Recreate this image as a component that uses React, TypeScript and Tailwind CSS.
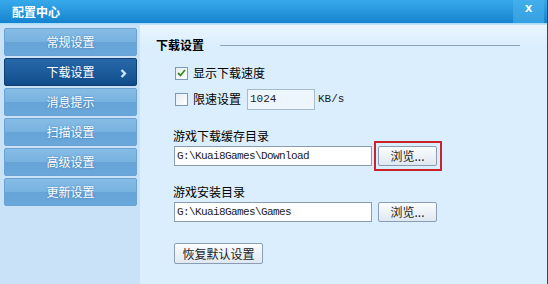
import { useState } from "react";

const cjk = "font-['Noto_Sans_CJK_SC','Noto_Sans',sans-serif]";
const mono = "font-['Liberation_Mono','Noto_Sans_CJK_SC',monospace]";

const navItems = ["常规设置", "下载设置", "消息提示", "扫描设置", "高级设置", "更新设置"];

function Checkbox({ checked }: { checked: boolean }) {
	return (
		<span className="w-[13px] h-[13px] border border-[#7b9ab8] bg-gradient-to-br from-[#e6edf3] to-white flex items-center justify-center">
			{checked && (
				<svg width="9" height="8" viewBox="0 0 9 8">
					<path d="M1 4 L3.5 6.5 L8 1" fill="none" stroke="#3c8a26" strokeWidth="1.8" />
				</svg>
			)}
		</span>
	);
}

function BrowseButton() {
	return (
		<button className="w-[59px] h-[20px] rounded-[2px] border border-[#8a9db3] bg-gradient-to-b from-[#fbfdff] to-[#dfe8f1] text-[12px] leading-none text-[#222] flex items-center justify-center pb-[1px]">
			浏览...
		</button>
	);
}

function PathInput({ value }: { value: string }) {
	return (
		<div
			className={`w-[198px] h-[20px] border border-[#8a9cb0] bg-white flex items-center px-[2px] text-[11px] tracking-[-0.6px] text-[#222] ${mono}`}
		>
			{value}
		</div>
	);
}

export default function App() {
	const [active] = useState(1);

	return (
		<div className={`w-[548px] h-[284px] flex flex-col overflow-hidden bg-[#dbeefd] border-r border-[#33475c] ${cjk}`}>
			{/* title bar */}
			<div className="h-[23px] flex items-center bg-gradient-to-b from-[#37a9ea] to-[#1583cf]">
				<span className="pl-[12px] text-[12px] font-bold text-white leading-none">配置中心</span>
				<div className="ml-auto mr-[3px] w-[31px] h-full bg-[#4bb2ec]/60 flex items-start justify-center pt-[1px]">
					<span className="text-white font-bold text-[13px] leading-none font-['Liberation_Sans',sans-serif]">x</span>
				</div>
			</div>
			<div className="h-[2px] bg-gradient-to-b from-[#9fd8f5] to-[#c6e6fa]" />

			<div className="flex-1 flex">
				{/* sidebar */}
				<div className="w-[140px] bg-[#c9e2f7] pt-[3px] pl-[4px] flex flex-col gap-[2px]">
					{navItems.map((name, i) => {
						const sel = i === active;
						return (
							<div
								key={name}
								className={`w-[133px] h-[28px] rounded-[2px] border relative flex items-center justify-center text-[12px] text-white ${
									sel
										? "border-[#103f70] bg-gradient-to-b from-[#2868a8] via-[#1d5c9c] to-[#114c8a]"
										: "border-[#6aa2d3] bg-[linear-gradient(#86bde6_0%,#78b2df_50%,#66a3d7_51%,#6aa7da_100%)]"
								}`}
							>
								<span className="[text-shadow:0_0_2px_rgba(30,80,140,0.6)]">{name}</span>
								{sel && (
									<svg className="absolute right-[9px] top-[10px]" width="7" height="9" viewBox="0 0 7 9">
										<path d="M1.5 1 L5 4.5 L1.5 8" fill="none" stroke="#cfeaff" strokeWidth="2.2" />
									</svg>
								)}
							</div>
						);
					})}
				</div>

				{/* main */}
				<div className="flex-1 flex flex-col pl-[16px] bg-gradient-to-b from-[#e9f5fe] via-[#dbeefd] via-[8%] to-[#dbeefd]">
					<div className="mt-[12px] h-[16px] flex items-center">
						<span className="text-[12px] font-bold text-black leading-none">下载设置</span>
						<span className="ml-[16px] mr-[27px] flex-1 h-px bg-[#8fa5bb]" />
					</div>

					<div className="mt-[13px] ml-[19px] h-[14px] flex items-center gap-[5px]">
						<Checkbox checked />
						<span className="text-[12px] text-black leading-none">显示下载速度</span>
					</div>

					<div className="mt-[8px] ml-[19px] h-[22px] flex items-center">
						<Checkbox checked={false} />
						<span className="ml-[5px] text-[12px] text-black leading-none">限速设置</span>
						<div
							className={`ml-[6px] w-[68px] h-[21px] border border-[#a8bbcd] bg-[#eef6fd] flex items-center px-[2px] text-[11px] text-[#222] ${mono}`}
						>
							1024
						</div>
						<span className={`ml-[3px] text-[11px] text-[#222] ${mono}`}>KB/s</span>
					</div>

					<div className="mt-[19px] ml-[17px] h-[14px] flex items-center">
						<span className="text-[12px] text-black leading-none">游戏下载缓存目录</span>
					</div>
					<div className="mt-[3px] ml-[18px] flex items-center gap-[6px]">
						<PathInput value="G:\Kuai8Games\Download" />
						<div className="relative">
							<BrowseButton />
							<span className="absolute left-[-4px] top-[-5px] right-[-5px] bottom-[-5px] border-2 border-[#c9242c]" />
						</div>
					</div>

					<div className="mt-[19px] ml-[17px] h-[14px] flex items-center">
						<span className="text-[12px] text-black leading-none">游戏安装目录</span>
					</div>
					<div className="mt-[3px] ml-[18px] flex items-center gap-[6px]">
						<PathInput value="G:\Kuai8Games\Games" />
						<BrowseButton />
					</div>

					<div className="mt-[21px] ml-[18px]">
						<button className="w-[89px] h-[21px] rounded-[2px] border border-[#8a9db3] bg-gradient-to-b from-[#fbfdff] to-[#dfe8f1] text-[12px] leading-none text-[#222] flex items-center justify-center">
							恢复默认设置
						</button>
					</div>
				</div>
			</div>
		</div>
	);
}
